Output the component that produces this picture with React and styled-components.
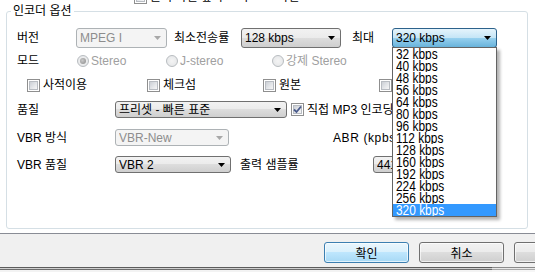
import React from 'react';
import styled, { createGlobalStyle, css } from 'styled-components';

const Global = createGlobalStyle`
  html, body { margin: 0; padding: 0; background: #fff; }
  body {
    font-family: "Liberation Sans", "Noto Sans CJK KR", sans-serif;
    font-size: 12px;
    color: #000;
  }
  * { box-sizing: border-box; }
`;

const Window = styled.div`
  width: 535px;
  height: 272px;
  overflow: hidden;
  display: flex;
  flex-direction: column;
  background: #f0f0f0;
`;

const TabPage = styled.div`
  flex: none;
  height: 234px;
  background: #fff;
  border-bottom: 1px solid #898c95;
  padding: 0 7px 0 6px;
  display: flex;
  flex-direction: column;
`;

const TopRow = styled.div`
  flex: none;
  height: 4px;
  overflow: hidden;
  display: flex;
  align-items: flex-end;
  padding-left: 128px;
  gap: 3px;
  line-height: 14px;
`;

const Group = styled.fieldset`
  flex: none;
  margin: 0;
  padding: 0 0 0 10px;
  min-width: 0;
  height: 225px;
  border: 1px solid #d5dfe5;
  border-radius: 3px;
  display: block;
`;

const Legend = styled.legend`
  padding: 0 2px;
  margin-left: -6px;
  line-height: 14px;
  font-size: 12px;
`;

const Row = styled.div`
  display: flex;
  align-items: center;
  height: ${p => p.$h}px;
  margin-top: ${p => p.$mt}px;
  padding-left: ${p => p.$pl || 0}px;
  white-space: nowrap;
`;

const Label = styled.span`
  flex: none;
  width: ${p => (p.$w ? `${p.$w}px` : 'auto')};
  margin-left: ${p => p.$ml || 0}px;
  color: ${p => (p.$disabled ? '#a0a0a0' : '#000')};
  line-height: 14px;
  letter-spacing: ${p => p.$ls || 0}px;
`;

const comboVariants = {
  normal: css`
    border-color: #707070;
    background: linear-gradient(#f2f2f2 0%, #ebebeb 50%, #dddddd 50%, #cfcfcf 100%);
    color: #000;
  `,
  disabled: css`
    border-color: #adb2b5;
    background: #f4f4f4;
    color: #8d8d8d;
  `,
  open: css`
    border-color: #2c628b;
    background: linear-gradient(#e5f4fc 0%, #c4e5f6 50%, #98d1ef 50%, #68b3db 100%);
    color: #000;
  `,
};

const Combo = styled.div`
  position: relative;
  flex: none;
  width: ${p => p.$w}px;
  height: 100%;
  margin-left: ${p => p.$ml || 0}px;
  border: 1px solid;
  border-radius: 3px;
  padding: 0 5px 0 3px;
  display: flex;
  align-items: center;
  line-height: 14px;
  ${p => comboVariants[p.$variant || 'normal']}
`;

const ComboText = styled.span`
  flex: 1;
  overflow: hidden;
`;

const Arrow = ({ color = '#000' }) => (
  <svg width="7" height="4" viewBox="0 0 7 4" style={{ flex: 'none' }}>
    <path d="M0 0H7L3.5 4Z" fill={color} />
  </svg>
);

const DropList = styled.div`
  position: absolute;
  top: 100%;
  left: -1px;
  width: 105px;
  z-index: 10;
  background: #fff;
  border: 1px solid #646464;
  box-shadow: 3px 3px 3px rgba(0, 0, 0, 0.3);
  padding: 0;
`;

const Item = styled.div`
  height: 12px;
  line-height: 12px;
  padding-left: 3px;
  background: ${p => (p.$selected ? '#3399ff' : 'transparent')};
  color: ${p => (p.$selected ? '#fff' : '#000')};
  overflow: hidden;
`;

const ItemText = styled.span`
  display: inline-block;
  font-family: "Liberation Sans", sans-serif;
  font-size: 14px;
  transform: scaleX(0.85);
  transform-origin: left center;
`;

const RadioItem = styled.span`
  flex: none;
  width: ${p => (p.$w ? `${p.$w}px` : 'auto')};
  display: flex;
  align-items: center;
  gap: 2px;
  color: #a0a0a0;
  line-height: 14px;
`;

const RadioDot = styled.span`
  flex: none;
  width: 12px;
  height: 12px;
  border-radius: 50%;
  border: 1px solid #b8bcc0;
  background: radial-gradient(circle, #f4f4f4 0%, #e2e4e6 100%);
  display: flex;
  align-items: center;
  justify-content: center;
  &::after {
    content: '';
    width: 6px;
    height: 6px;
    border-radius: 50%;
    background: ${p => (p.$checked ? 'radial-gradient(circle at 40% 40%, #c8c8c8, #8a8a8a)' : 'transparent')};
  }
`;

const CheckItem = styled.span`
  flex: none;
  width: ${p => (p.$w ? `${p.$w}px` : 'auto')};
  margin-left: ${p => p.$ml || 0}px;
  display: flex;
  align-items: center;
  gap: 3px;
  line-height: 14px;
`;

const CheckBox = styled.span`
  position: relative;
  flex: none;
  width: 13px;
  height: 13px;
  border: 1px solid #8f8f8f;
  background: #fff;
  padding: 1px;
  display: flex;
  &::before {
    content: '';
    flex: 1;
    border: 1px solid #b8bcc2;
    background: linear-gradient(135deg, #cbcfd5 0%, #e6e8eb 60%, #f6f6f6 100%);
  }
  & > svg {
    position: absolute;
    left: 0;
    top: 0;
  }
`;

const Check = () => (
  <svg width="11" height="11" viewBox="0 0 11 11">
    <path d="M2 5.5 L4.5 8 L9 2.5" fill="none" stroke="#4a5b8c" strokeWidth="1.8" />
  </svg>
);

const Footer = styled.div`
  flex: none;
  height: 33px;
  display: flex;
  gap: 10px;
  padding: 8px 0 0 324px;
`;

const Button = styled.button`
  flex: none;
  width: 85px;
  height: 21px;
  padding: 0;
  font-family: "Liberation Sans", "Noto Sans CJK KR", sans-serif;
  font-size: 12px;
  color: #000;
  border-radius: 3px;
  border: 1px solid ${p => (p.$default ? '#3c7fb1' : '#707070')};
  background: ${p =>
    p.$default
      ? 'linear-gradient(#eaf6fd 0%, #d9f0fc 50%, #bee6fd 50%, #a7d9f5 100%)'
      : 'linear-gradient(#f2f2f2 0%, #ebebeb 50%, #dddddd 50%, #cfcfcf 100%)'};
  box-shadow: inset 0 0 0 1px rgba(255, 255, 255, 0.65);
`;

const BottomEdge = styled.div`
  flex: none;
  height: 5px;
  display: flex;
`;

const EdgePart = styled.div`
  flex: ${p => (p.$w ? 'none' : '1')};
  width: ${p => (p.$w ? `${p.$w}px` : 'auto')};
  background: ${p =>
    p.$dark
      ? 'linear-gradient(#5c5c5c 0 1px, #cfcfcf 1px 2px, #6d6d6d 2px 3px, #f3f3f3 3px)'
      : 'linear-gradient(#8a8a8a 0 1px, #e8e8e8 1px 2px, #a8a8a8 2px 3px, #f6f6f6 3px)'};
`;

const rates = [32, 40, 48, 56, 64, 80, 96, 112, 128, 160, 192, 224, 256, 320];

export default function App() {
  return (
    <Window>
      <Global />
      <TabPage>
        <TopRow>
          <CheckBox />
          <Label>출력 파일 덮어 쓰기</Label>
          <Label $ml={26}>확인</Label>
        </TopRow>
        <Group>
          <Legend>인코더 옵션</Legend>

          <Row $h={20} $mt={10}>
            <Label $w={59}>버전</Label>
            <Combo $w={91} $variant="disabled">
              <ComboText>MPEG I</ComboText>
              <Arrow color="#a8a8a8" />
            </Combo>
            <Label $w={67} $ml={7}>최소전송률</Label>
            <Combo $w={100}>
              <ComboText>128 kbps</ComboText>
              <Arrow />
            </Combo>
            <Label $w={40} $ml={11}>최대</Label>
            <Combo $w={105} $variant="open">
              <ComboText>320 kbps</ComboText>
              <Arrow />
              <DropList>
                {rates.map(r => (
                  <Item key={r} $selected={r === 320}>
                    <ItemText>{r} kbps</ItemText>
                  </Item>
                ))}
              </DropList>
            </Combo>
          </Row>

          <Row $h={20} $mt={3}>
            <Label $w={60}>모드</Label>
            <RadioItem $w={89}>
              <RadioDot $checked />
              Stereo
            </RadioItem>
            <RadioItem $w={106}>
              <RadioDot />
              J-stereo
            </RadioItem>
            <RadioItem>
              <RadioDot />
              강제 Stereo
            </RadioItem>
          </Row>

          <Row $h={20} $mt={4} $pl={10}>
            <CheckItem $w={120}>
              <CheckBox />
              사적이용
            </CheckItem>
            <CheckItem $w={116}>
              <CheckBox />
              체크섬
            </CheckItem>
            <CheckItem $w={116}>
              <CheckBox />
              원본
            </CheckItem>
            <CheckItem>
              <CheckBox />
              저작권
            </CheckItem>
          </Row>

          <Row $h={17} $mt={6}>
            <Label $w={98}>품질</Label>
            <Combo $w={172}>
              <ComboText>프리셋 - 빠른 표준</ComboText>
              <Arrow />
            </Combo>
            <CheckItem $ml={4}>
              <CheckBox>
                <Check />
              </CheckBox>
              직접 MP3 인코딩
            </CheckItem>
          </Row>

          <Row $h={17} $mt={11}>
            <Label $w={98}>VBR 방식</Label>
            <Combo $w={114} $variant="disabled">
              <ComboText>VBR-New</ComboText>
              <Arrow color="#a8a8a8" />
            </Combo>
            <Label $ml={104} $ls={0.6}>ABR (kpbs)</Label>
          </Row>

          <Row $h={17} $mt={10}>
            <Label $w={98}>VBR 품질</Label>
            <Combo $w={116}>
              <ComboText>VBR 2</ComboText>
              <Arrow />
            </Combo>
            <Label $w={133} $ml={9}>출력 샘플률</Label>
            <Combo $w={110}>
              <ComboText>44100 Hz</ComboText>
              <Arrow />
            </Combo>
          </Row>
        </Group>
      </TabPage>
      <Footer>
        <Button $default>확인</Button>
        <Button>취소</Button>
        <Button>적용</Button>
      </Footer>
      <BottomEdge>
        <EdgePart $w={492} $dark />
        <EdgePart />
      </BottomEdge>
    </Window>
  );
}
